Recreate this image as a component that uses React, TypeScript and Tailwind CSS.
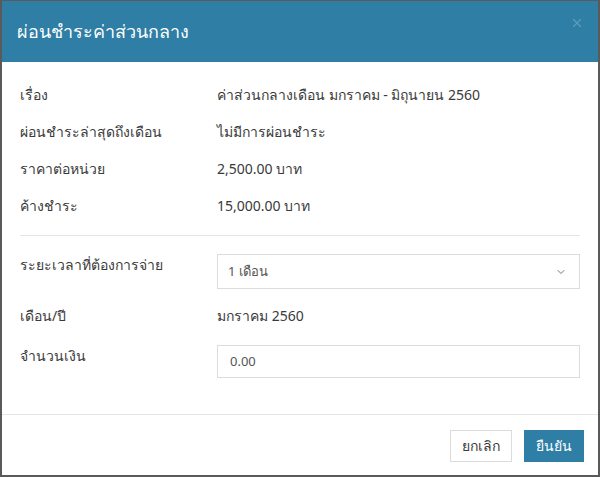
import { ChevronDown, X } from 'lucide-react';

const INFO = [
  { label: 'เรื่อง', value: 'ค่าส่วนกลางเดือน มกราคม - มิถุนายน 2560' },
  { label: 'ผ่อนชำระล่าสุดถึงเดือน', value: 'ไม่มีการผ่อนชำระ' },
  { label: 'ราคาต่อหน่วย', value: '2,500.00 บาท' },
  { label: 'ค้างชำระ', value: '15,000.00 บาท' },
];

export default function App() {
  return (
    <div className="w-[600px] h-[477px] bg-[#5a5a5a] pt-px px-[2px] pb-[2px] font-['Noto_Sans',sans-serif] text-[#3a3a3a] text-[14px]">
      <div className="h-full bg-white flex flex-col">
        <div className="h-[61px] bg-[#2e7ea5] flex items-center justify-between pl-[15px] pr-[14px]">
          <h1 className="text-white text-[18px]">ผ่อนชำระค่าส่วนกลาง</h1>
          <X size={14} className="text-[#5f9cbb] -mt-[18px]" />
        </div>

        <div className="flex-1 px-[18px] pt-[22px]">
          <div className="flex flex-col gap-[17px] pb-[20px]">
            {INFO.map((row) => (
              <div key={row.label} className="flex h-[20px] items-center">
                <div className="w-[197px] shrink-0">{row.label}</div>
                <div>{row.value}</div>
              </div>
            ))}
          </div>

          <div className="border-t border-[#e5e5e5]" />

          <div className="pt-[18px] flex flex-col">
            <div className="flex">
              <div className="w-[197px] shrink-0">ระยะเวลาที่ต้องการจ่าย</div>
              <div className="flex-1 h-[35px] border border-[#dcdcdc] flex items-center justify-between pl-[10px] pr-[12px] text-[13px] text-[#555]">
                <span>1 เดือน</span>
                <ChevronDown size={12} className="text-[#777]" />
              </div>
            </div>

            <div className="flex h-[20px] items-center mt-[16px]">
              <div className="w-[197px] shrink-0">เดือน/ปี</div>
              <div>มกราคม 2560</div>
            </div>

            <div className="flex mt-[20px]">
              <div className="w-[197px] shrink-0">จำนวนเงิน</div>
              <div className="flex-1 h-[33px] border border-[#dcdcdc] flex items-center pl-[12px] text-[13px] text-[#555]">
                0.00
              </div>
            </div>
          </div>
        </div>

        <div className="border-t border-[#e5e5e5] h-[61px] flex items-center justify-end gap-[12px] pr-[14px] pt-[1px]">
          <button className="h-[32px] px-[11px] border border-[#dcdcdc] bg-white text-[#3a3a3a]">ยกเลิก</button>
          <button className="h-[32px] px-[12px] bg-[#2e7ea5] text-white">ยืนยัน</button>
        </div>
      </div>
    </div>
  );
}
